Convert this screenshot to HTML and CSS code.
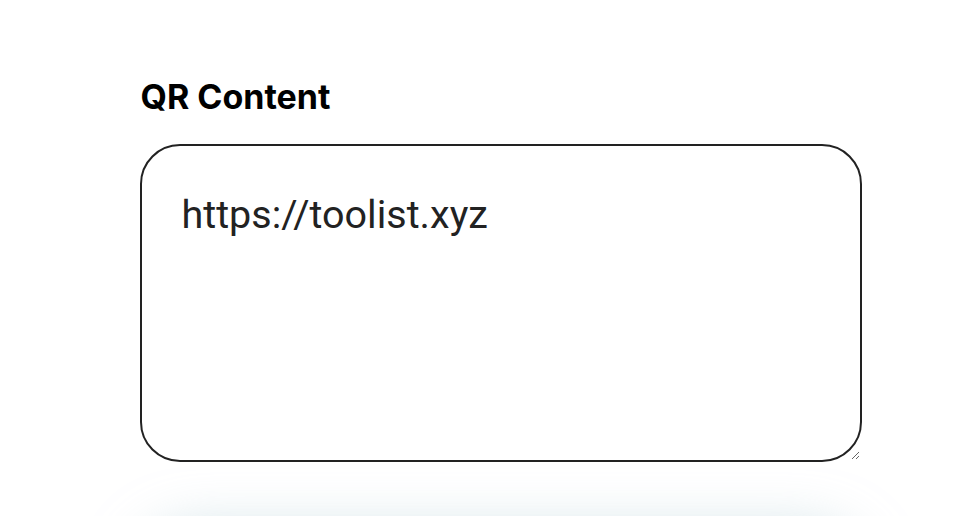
FILE: index.html
```html
<!DOCTYPE html>
<html lang="en">
<head>
<meta charset="utf-8">
<title>QR Content</title>
<link rel="stylesheet" href="styles.css">
</head>
<body>
<main class="page">
  <section class="field">
    <label class="field-label" for="qr">QR Content</label>
    <textarea class="field-input" id="qr">https://toolist.xyz</textarea>
  </section>
  <section class="preview"></section>
</main>
</body>
</html>
```
FILE: styles.css
```css
html, body {
  margin: 0;
  padding: 0;
  background: #ffffff;
  overflow: hidden;
}
body {
  font-family: Inter, Roboto, "Liberation Sans", sans-serif;
  color: #000;
}
.page {
  width: 722px;
  margin: 0 auto;
  padding-top: 76px;
  transform: translateX(16px);
}
.field {
  display: flex;
  flex-direction: column;
}
.field-label {
  font-family: Inter, Roboto, "Liberation Sans", sans-serif;
  font-size: 34px;
  font-weight: 700;
  line-height: 41px;
  margin-left: 1px;
  margin-bottom: 27px;
}
.field-input {
  box-sizing: border-box;
  width: 722px;
  height: 318px;
  border: 2px solid #222222;
  border-radius: 40px;
  padding: 46px 40px 40px 40px;
  font-family: Roboto, "Liberation Sans", sans-serif;
  font-size: 39.5px;
  line-height: 46px;
  color: #222222;
  background: #ffffff;
  outline: none;
  resize: vertical;
}
.preview {
  margin-top: 70px;
  height: 300px;
  border-radius: 60px;
  background: #ffffff;
  box-shadow: 0 0 50px 8px rgba(186, 212, 220, 0.6);
}
```
